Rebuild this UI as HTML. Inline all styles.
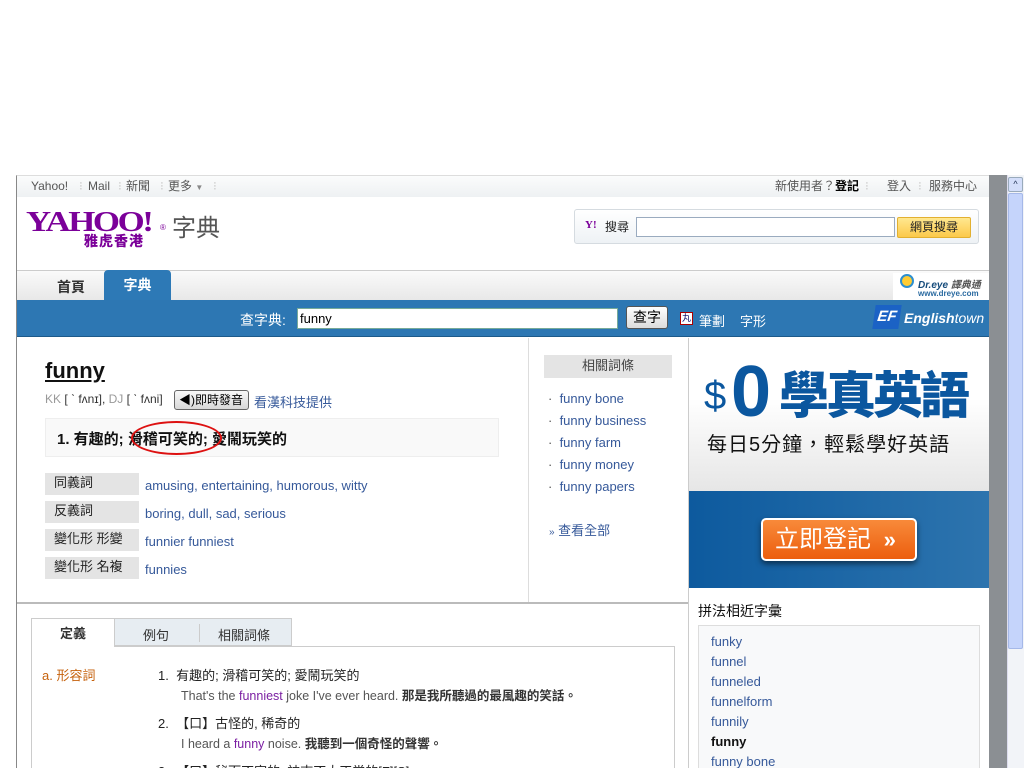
<!DOCTYPE html>
<html><head><meta charset="utf-8"><style>
*{margin:0;padding:0;box-sizing:border-box}
html,body{width:1024px;height:768px;overflow:hidden}
body{background:#fff;font-family:"Liberation Sans","Noto Sans CJK TC",sans-serif;font-size:13px;color:#333;position:relative}
.a{position:absolute}
a,.lk{color:#36599a;text-decoration:none}
</style></head><body>
<div class="a" style="left:16px;top:175px;width:973px;height:593px;background:#fff;border-left:1px solid #888;border-top:1px solid #ddd"></div>
<div class="a" style="left:989px;top:175px;width:18px;height:593px;background:#8b8f93"></div>
<div class="a" style="left:1007px;top:175px;width:17px;height:593px;background:#f2f4f8;border-left:1px solid #dde"></div>
<div class="a" style="left:1008px;top:177px;width:15px;height:15px;background:#d3defa;border:1px solid #9ab;border-radius:2px;font-size:9px;text-align:center;line-height:13px;color:#235">&#94;</div>
<div class="a" style="left:1008px;top:193px;width:15px;height:456px;background:#c5d4fb;border:1px solid #a5b8e8;border-radius:2px"></div>

<div class="a" style="left:17px;top:176px;width:972px;height:21px;background:linear-gradient(#fbfcfc,#eef1f3);font-size:12px;color:#555;line-height:21px">
<span class="a" style="left:14px">Yahoo!</span><span class="a" style="left:62px;color:#ccc">⁝</span><span class="a" style="left:71px">Mail</span><span class="a" style="left:101px;color:#ccc">⁝</span><span class="a" style="left:109px">新聞</span><span class="a" style="left:143px;color:#ccc">⁝</span><span class="a" style="left:151px">更多 <span style="font-size:8px;color:#888">▼</span></span><span class="a" style="left:196px;color:#ccc">⁝</span>
<span class="a" style="left:758px">新使用者？<b style="color:#000">登記</b></span><span class="a" style="left:848px;color:#ccc">⁝</span><span class="a" style="left:870px">登入</span><span class="a" style="left:901px;color:#ccc">⁝</span><span class="a" style="left:912px">服務中心</span>
</div>
<div class="a" style="left:26px;top:206px;font-family:'Liberation Serif',serif;font-size:29px;line-height:32px;font-weight:bold;color:#7b0099;letter-spacing:-2px;transform:scaleX(1.2);transform-origin:left">YAHOO!</div>
<div class="a" style="left:160px;top:223px;font-size:8px;color:#7b0099">®</div>
<div class="a" style="left:84px;top:231px;font-size:14px;font-weight:900;color:#7b0099;letter-spacing:1px">雅虎香港</div>
<div class="a" style="left:172px;top:208px;font-size:24px;color:#555">字典</div>
<div class="a" style="left:574px;top:209px;width:405px;height:35px;border:1px solid #d5dbe0;border-radius:3px;background:linear-gradient(#fff,#eef2f5)"></div>
<div class="a" style="left:585px;top:219px;font-size:11px;font-weight:bold;color:#7b0099;font-family:'Liberation Serif',serif">Y!</div>
<div class="a" style="left:605px;top:218px;font-size:12px;color:#222">搜尋</div>
<div class="a" style="left:636px;top:217px;width:259px;height:20px;border:1px solid #9aabbf;background:#fff"></div>
<div class="a" style="left:897px;top:217px;width:74px;height:21px;border:1px solid #e2b030;border-radius:2px;background:linear-gradient(#ffe890,#fcc94a);font-size:12px;text-align:center;line-height:19px;color:#222">網頁搜尋</div>
<div class="a" style="left:17px;top:270px;width:972px;height:1px;background:#ccc"></div>
<div class="a" style="left:17px;top:271px;width:972px;height:29px;background:linear-gradient(#fafafa,#e8e8e8)"></div>
<div class="a" style="left:57px;top:277px;font-size:14px;font-weight:bold;color:#333">首頁</div>
<div class="a" style="left:104px;top:270px;width:67px;height:31px;background:#2d79b6;border-radius:4px 4px 0 0;color:#fff;font-size:14px;font-weight:bold;text-align:center;line-height:31px">字典</div>
<div class="a" style="left:893px;top:273px;width:96px;height:27px;background:#fff"></div>
<div class="a" style="left:900px;top:274px;width:14px;height:14px;border-radius:50%;border:2px solid #2c8fd0;background:#fc3"></div>
<div class="a" style="left:918px;top:276px;font-size:10px;font-weight:bold;font-style:italic;color:#144a7a">Dr.eye <span style="color:#555">譯典通</span></div>
<div class="a" style="left:918px;top:289px;font-size:8px;color:#2a6aa0;font-weight:bold">www.dreye.com</div>
<div class="a" style="left:17px;top:300px;width:972px;height:37px;background:#2d77b3;border-bottom:1px solid #1d5a8a"></div>
<div class="a" style="left:240px;top:310px;font-size:14px;color:#fff">查字典:</div>
<div class="a" style="left:297px;top:308px;width:321px;height:21px;background:#fff;border:1px solid #7a9;font-size:13px;line-height:19px;padding-left:2px;color:#000">funny</div>
<div class="a" style="left:626px;top:306px;width:42px;height:23px;background:linear-gradient(#fff,#dcdcdc);border:1px solid #555;border-radius:3px;font-size:14px;text-align:center;line-height:20px;color:#000">查字</div>
<div class="a" style="left:680px;top:312px;width:13px;height:13px;background:#fff;border:1px solid #a00;font-size:9px;line-height:11px;text-align:center;color:#006">丸</div>
<div class="a" style="left:699px;top:311px;font-size:13px;color:#fff">筆劃</div>
<div class="a" style="left:740px;top:311px;font-size:13px;color:#fff">字形</div>
<div class="a" style="left:874px;top:305px;width:26px;height:24px;background:#1b62c5;color:#fff;font-style:italic;font-weight:bold;font-size:15px;line-height:24px;text-align:center;transform:skewX(-8deg)">EF</div>
<div class="a" style="left:904px;top:310px;font-size:14px;font-style:italic;color:#fff"><b>English</b>town</div>

<div class="a" style="left:45px;top:358px;font-size:22px;font-weight:bold;color:#111;text-decoration:underline">funny</div>
<div class="a" style="left:45px;top:392px;font-size:12px;color:#999">KK <span style="color:#333">[ ˋ fʌnɪ],</span> DJ <span style="color:#333">[ ˋ fʌni]</span></div>
<div class="a" style="left:174px;top:390px;width:75px;height:20px;border:1px solid #666;border-radius:3px;background:linear-gradient(#f8f8f8,#d8d8d8);font-size:12px;line-height:18px;padding-left:4px;color:#000">◀)即時發音</div>
<div class="a" style="left:254px;top:392px;font-size:13px;color:#36599a">看漢科技提供</div>
<div class="a" style="left:45px;top:418px;width:454px;height:39px;background:#f9f9f9;border:1px solid #eee"></div>
<div class="a" style="left:57px;top:428px;font-size:15px;font-weight:bold;color:#111">1. 有趣的; 滑稽可笑的; 愛鬧玩笑的</div>
<div class="a" style="left:131px;top:421px;width:91px;height:34px;border:2px solid #d11;border-radius:50%"></div>

<div class="a" style="left:45px;top:473px;width:94px;height:22px;background:#e4e4e4;font-size:13px;line-height:20px;padding-left:9px;color:#222">同義詞</div>
<div class="a lk" style="left:145px;top:478px;font-size:13px">amusing, entertaining, humorous, witty</div>
<div class="a" style="left:45px;top:501px;width:94px;height:22px;background:#e4e4e4;font-size:13px;line-height:20px;padding-left:9px;color:#222">反義詞</div>
<div class="a lk" style="left:145px;top:506px;font-size:13px">boring, dull, sad, serious</div>
<div class="a" style="left:45px;top:529px;width:94px;height:22px;background:#e4e4e4;font-size:13px;line-height:20px;padding-left:9px;color:#222">變化形 形變</div>
<div class="a lk" style="left:145px;top:534px;font-size:13px">funnier funniest</div>
<div class="a" style="left:45px;top:557px;width:94px;height:22px;background:#e4e4e4;font-size:13px;line-height:20px;padding-left:9px;color:#222">變化形 名複</div>
<div class="a lk" style="left:145px;top:562px;font-size:13px">funnies</div>

<div class="a" style="left:528px;top:338px;width:1px;height:265px;background:#ddd"></div>
<div class="a" style="left:544px;top:355px;width:128px;height:23px;background:#e4e4e4;text-align:center;line-height:22px;font-size:13px;color:#444">相關詞條</div>
<div class="a" style="left:548px;top:388px;font-size:13px;line-height:22px;color:#36599a">
<div><span style="color:#555">·</span>&nbsp; funny bone</div><div><span style="color:#555">·</span>&nbsp; funny business</div><div><span style="color:#555">·</span>&nbsp; funny farm</div><div><span style="color:#555">·</span>&nbsp; funny money</div><div><span style="color:#555">·</span>&nbsp; funny papers</div></div>
<div class="a" style="left:549px;top:520px;font-size:13px;color:#36599a"><span style="font-size:10px">»</span> 查看全部</div>

<div class="a" style="left:688px;top:338px;width:1px;height:430px;background:#ccc"></div>
<div class="a" style="left:689px;top:338px;width:300px;height:153px;background:linear-gradient(#fff 40%,#e6e6e6)"></div>
<div class="a" style="left:704px;top:374px;font-size:40px;color:#0b579f">$</div>
<div class="a" style="left:731px;top:352px;font-size:72px;font-weight:bold;color:#0b579f;line-height:80px">0</div>
<div class="a" style="left:779px;top:364px;font-size:50px;line-height:64px;font-weight:900;color:#0b579f;letter-spacing:-3px">學真英語</div>
<div class="a" style="left:707px;top:428px;font-size:20px;color:#111;letter-spacing:1px">每日5分鐘，輕鬆學好英語</div>
<div class="a" style="left:689px;top:491px;width:300px;height:97px;background:linear-gradient(90deg,#0d5a9e,#2d74ae)"></div>
<div class="a" style="left:761px;top:518px;width:156px;height:43px;background:linear-gradient(#f88a3a,#ec5e0e);border:2px solid #fff;border-radius:5px;box-shadow:0 3px 6px rgba(0,0,0,.5);color:#fff;font-size:24px;line-height:39px;padding-left:12px">立即登記 <b style="font-size:22px;margin-left:6px">»</b></div>

<div class="a" style="left:698px;top:601px;font-size:14px;color:#111">拼法相近字彙</div>
<div class="a" style="left:698px;top:625px;width:282px;height:150px;background:#f8f9fa;border:1px solid #ddd"></div>
<div class="a" style="left:711px;top:632px;font-size:13px;line-height:20px;color:#36599a">
<div>funky</div><div>funnel</div><div>funneled</div><div>funnelform</div><div>funnily</div><div style="color:#111;font-weight:bold">funny</div><div>funny bone</div></div>

<div class="a" style="left:17px;top:602px;width:671px;height:2px;background:#bbb"></div>
<div class="a" style="left:31px;top:646px;width:644px;height:130px;border:1px solid #ccc;background:#fff"></div>
<div class="a" style="left:31px;top:618px;width:84px;height:29px;background:#fff;border:1px solid #ccc;border-bottom:none;text-align:center;line-height:29px;font-size:13px;color:#333;font-weight:bold">定義</div>
<div class="a" style="left:114px;top:618px;width:178px;height:28px;background:#e7edf2;border:1px solid #ccc"></div>
<div class="a" style="left:199px;top:624px;width:1px;height:18px;background:#ccc"></div>
<div class="a" style="left:143px;top:625px;font-size:13px;color:#333">例句</div>
<div class="a" style="left:218px;top:625px;font-size:13px;color:#333">相關詞條</div>
<div class="a" style="left:42px;top:665px;font-size:13px;color:#c6620d">a. 形容詞</div>
<div class="a" style="left:158px;top:666px;font-size:13px;color:#222;line-height:20px">
<div>1.&nbsp;&nbsp;有趣的; 滑稽可笑的; 愛鬧玩笑的</div>
<div style="padding-left:23px;color:#555;font-size:12.5px">That's the <span style="color:#7b1fa2">funniest</span> joke I've ever heard. <b style="color:#333">那是我所聽過的最風趣的笑話。</b></div>
<div style="margin-top:8px">2.&nbsp;&nbsp;【口】古怪的, 稀奇的</div>
<div style="padding-left:23px;color:#555;font-size:12.5px">I heard a <span style="color:#7b1fa2">funny</span> noise. <b style="color:#333">我聽到一個奇怪的聲響。</b></div>
<div style="margin-top:8px">3.&nbsp;&nbsp;【口】秘而不宣的; 神志不太正常的[F][S]</div>
</div>
</body></html>
